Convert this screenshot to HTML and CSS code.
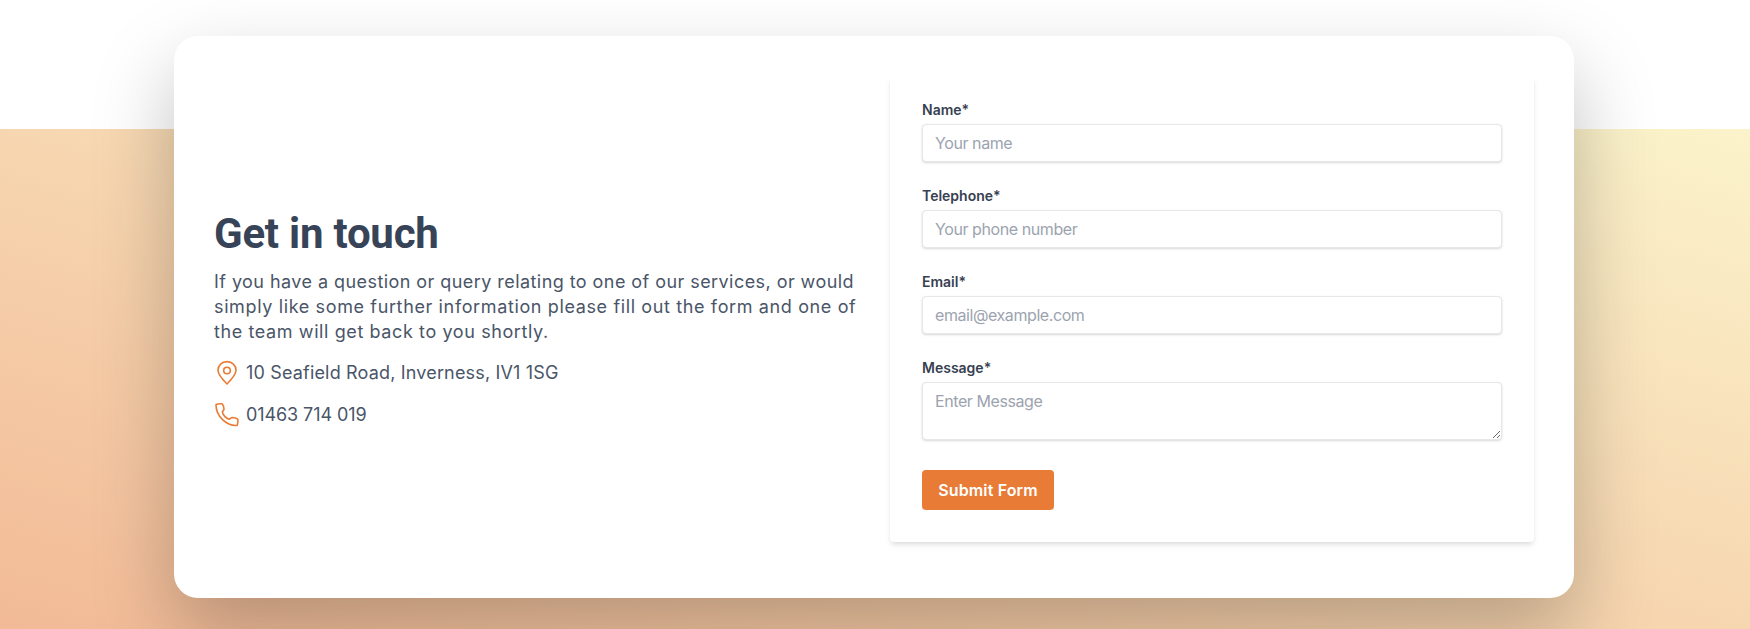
FILE: index.html
```html
<!DOCTYPE html>
<html lang="en">
<head>
<meta charset="utf-8">
<title>Get in touch</title>
<link rel="stylesheet" href="styles.css">
</head>
<body>
<main class="page">
  <section class="card">
    <div class="intro">
      <h1 class="title">Get in touch</h1>
      <p class="lead"><span class="l1">If you have a question or query relating to one of our services, or would</span><br><span class="l2">simply like some further information please fill out the form and one of</span><br><span class="l3">the team will get back to you shortly.</span></p>
      <div class="contact">
        <svg class="icon" viewBox="0 0 26 26"><path d="M13 1.600c-5.100 0-9 3.800-9 8.700 0 4.400 3.700 8.400 9 13.700 5.300-5.300 9-9.300 9-13.700 0-4.900-3.900-8.700-9-8.700Z"/><circle cx="13" cy="10.500" r="3.300"/></svg>
        <span class="addr">10 Seafield Road, Inverness, IV1 1SG</span>
      </div>
      <div class="contact">
        <svg class="icon" viewBox="0 0 26 26"><path d="M2 2.600c2-.8 4.300-1 6.300-.6 1 1.400 1.600 3 1.700 5 0 1.300-1.200 1.900-1.700 3 .9 3 3.600 6 6.700 7.300 1.300-.4 2-1.700 3.300-1.800 2 .1 4 .6 5.500 1.600.4 2 .2 4.300-.6 6.300C12.500 24.200 1.800 14 2 2.600Z"/></svg>
        <span class="tel">01463 714 019</span>
      </div>
    </div>
    <form class="form">
      <div class="field"><label for="name">Name*</label><input id="name" type="text" placeholder="Your name"></div>
      <div class="field"><label for="phone">Telephone*</label><input id="phone" type="tel" placeholder="Your phone number"></div>
      <div class="field"><label for="email">Email*</label><input id="email" type="email" placeholder="email@example.com"></div>
      <div class="field message"><label for="message">Message*</label><textarea id="message" placeholder="Enter Message"></textarea></div>
      <button class="submit" type="button">Submit Form</button>
    </form>
  </section>
</main>
</body>
</html>
```
FILE: styles.css
```css
* { box-sizing: border-box; }
body { margin: 0; background: #fff; font-family: Inter, sans-serif; }
.page {
  height: 629px;
  padding: 36px 176px 0 174px;
  overflow: hidden;
  background: linear-gradient(to bottom left, #fbf3cb, #f2ba96) 0 129px / 100% 500px no-repeat;
}
.card {
  display: grid;
  grid-template-columns: 1fr 1fr;
  gap: 32px;
  height: 562px;
  padding: 40px 40px 56px;
  border-radius: 24px;
  background: #fff;
  box-shadow: 0 35px 80px rgba(0, 0, 0, .25);
}
.intro { padding-top: 133px; color: #4a5568; font-size: 18px; white-space: nowrap; }
.title {
  margin: 0 0 10px;
  font: 700 42px/50px Roboto, sans-serif;
  letter-spacing: -.23px;
  color: #374357;
}
.lead { margin: 0 0 16px; line-height: 25px; }
.l1 { letter-spacing: .44px; }
.l2 { letter-spacing: .63px; }
.l3 { letter-spacing: .6px; }
.addr { letter-spacing: .17px; }
.tel { letter-spacing: -.09px; }
.contact { display: flex; align-items: center; gap: 6px; height: 26px; margin-bottom: 16px; }
.contact span { padding-bottom: 2px; }
.icon { width: 26px; height: 26px; fill: none; stroke: #e87b35; stroke-width: 1.6; stroke-linejoin: round; }
.form {
  height: 466px;
  padding: 24px 32px 32px;
  border-radius: 4px;
  box-shadow: 0 4px 6px -1px rgba(0, 0, 0, .1), 0 2px 4px -1px rgba(0, 0, 0, .06);
}
.field { display: flex; flex-direction: column; gap: 4px; margin-bottom: 24px; }
.field label { font-weight: 600; font-size: 14px; line-height: 20px; color: #374151; }
.field input, .field textarea {
  width: 100%;
  height: 38px;
  margin: 0;
  padding: 6px 12px;
  border: 1px solid #e5e7eb;
  border-radius: 4px;
  background: #fff;
  font: 16px/24px Inter, sans-serif;
  letter-spacing: -.42px;
  box-shadow: 0 1px 3px rgba(0, 0, 0, .1), 0 1px 2px rgba(0, 0, 0, .06);
}
.field textarea { height: 58px; resize: vertical; }
.message { margin-bottom: 30px; }
::placeholder { color: #9ca3af; opacity: 1; }
.submit {
  width: 132px;
  height: 40px;
  padding: 0;
  border: 0;
  border-radius: 4px;
  background: #e87b35;
  color: #fff;
  font: 600 16px/24px Inter, sans-serif;
  letter-spacing: .15px;
}
```
